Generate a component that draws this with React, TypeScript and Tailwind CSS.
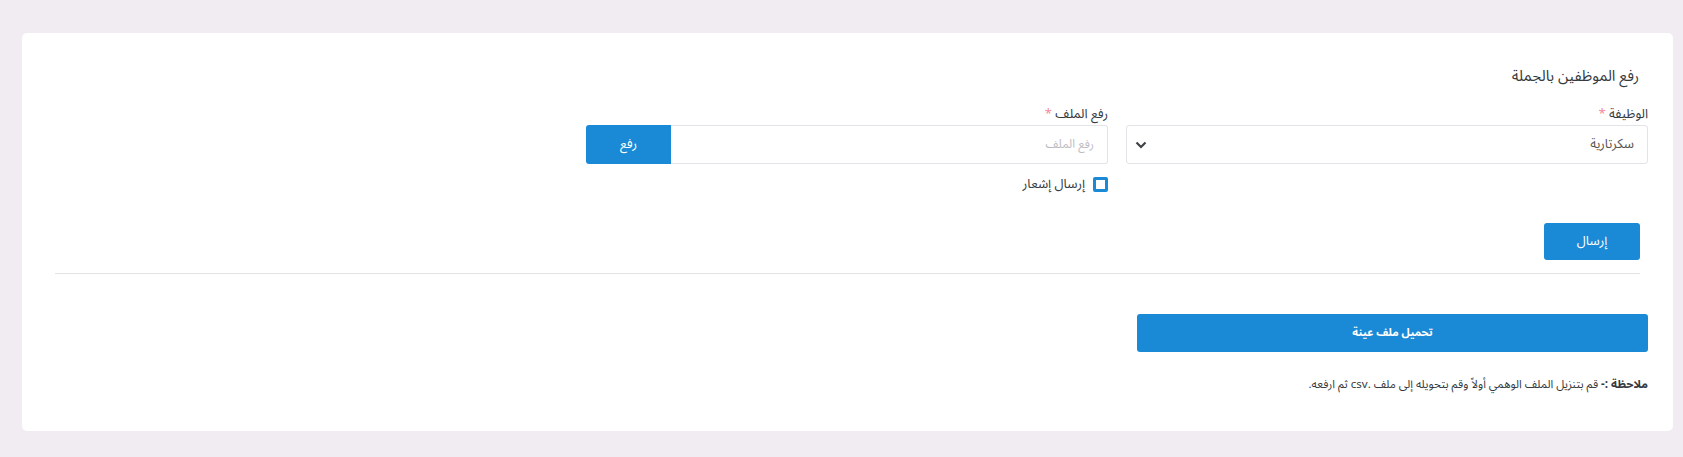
import React from 'react'

const font = { fontFamily: '"Noto Sans Arabic", "Noto Naskh Arabic", "DejaVu Sans", sans-serif' }

function Label({ children }: { children: React.ReactNode }) {
  return (
    <label className="block h-[18px] text-[13px] leading-[18px] text-[#343a40]">
      {children} <span className="text-[#f58aa0]">*</span>
    </label>
  )
}

export default function App() {
  return (
    <div dir="rtl" style={font} className="w-[1683px] h-[457px] bg-[#f0ecf2] pt-[33px] pr-[10px]">
      <div className="w-[1651px] h-[398px] bg-white rounded-[5px]">
        {/* Title */}
        <div className="pt-[31px] pr-[34px]">
          <h4 className="text-[15px] leading-[24px] text-[#343a40]">رفع الموظفين بالجملة</h4>
        </div>

        {/* Fields */}
        <div className="mt-[17px] pr-[25px] flex gap-[18px]">
          <div className="w-[522px]">
            <Label>الوظيفة</Label>
            <div className="mt-[2px] h-[39px] border border-[#e3e3e8] rounded-[3px] flex items-center justify-between pr-[13px] pl-[8px]">
              <span className="text-[13px] text-[#555]">سكرتارية</span>
              <svg width="12" height="9" viewBox="0 0 12 9" fill="none">
                <path d="M1.5 2.5 L6 7 L10.5 2.5" stroke="#3f4347" strokeWidth="2.2" />
              </svg>
            </div>
          </div>
          <div className="w-[522px]">
            <Label>رفع الملف</Label>
            <div className="mt-[2px] h-[39px] flex">
              <div className="flex-1 border border-[#e3e3e8] border-l-0 rounded-r-[3px] flex items-center pr-[13px]">
                <span className="text-[12px] text-[#bdbdc4]">رفع الملف</span>
              </div>
              <button className="w-[85px] h-full bg-[#1a8ad7] rounded-l-[3px] text-white text-[13px]">رفع</button>
            </div>
            <div className="mt-[13px] flex items-center gap-[8px]">
              <span className="w-[15px] h-[15px] border-[3px] border-[#1a8ad7] rounded-[2px] bg-white" />
              <span className="text-[13px] leading-[15px] text-[#343a40]">إرسال إشعار</span>
            </div>
          </div>
        </div>

        {/* Submit */}
        <div className="mt-[31px] pr-[33px]">
          <button className="w-[96px] h-[37px] bg-[#1a8ad7] rounded-[3px] text-white text-[13px]">إرسال</button>
        </div>

        <div className="mt-[13px] mx-[33px] border-t border-[#e4e4e6]" />

        {/* Sample download */}
        <div className="mt-[40px] pr-[25px]">
          <button className="w-[511px] h-[38px] bg-[#1a8ad7] rounded-[3px] text-white text-[11px] font-bold">
            تحميل ملف عينة
          </button>
        </div>

        <p className="mt-[23px] pr-[25px] text-[11.5px] leading-[18px] text-[#343a40]">
          <span className="font-bold">ملاحظة :-</span> قم بتنزيل الملف الوهمي أولاً وقم بتحويله إلى ملف .csv ثم ارفعه.
        </p>
      </div>
    </div>
  )
}
